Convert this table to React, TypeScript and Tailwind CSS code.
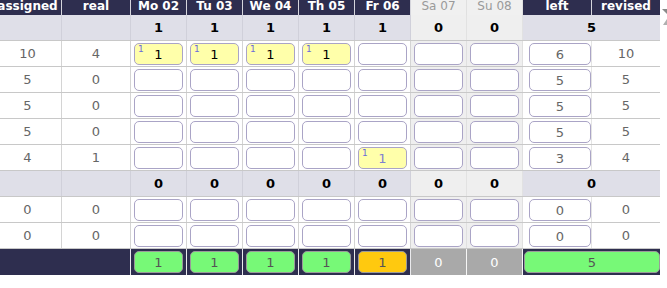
import React from "react";

type Cell = null | { v: number; note?: number; soft?: boolean };

type Row = { assigned: number; real: number; days: Cell[]; left: number; revised: number };

const days = ["Mo 02", "Tu 03", "We 04", "Th 05", "Fr 06", "Sa 07", "Su 08"];

const e: Cell = null;
const one: Cell = { v: 1, note: 1 };

const groupA: Row[] = [
  { assigned: 10, real: 4, days: [one, one, one, one, e, e, e], left: 6, revised: 10 },
  { assigned: 5, real: 0, days: [e, e, e, e, e, e, e], left: 5, revised: 5 },
  { assigned: 5, real: 0, days: [e, e, e, e, e, e, e], left: 5, revised: 5 },
  { assigned: 5, real: 0, days: [e, e, e, e, e, e, e], left: 5, revised: 5 },
  { assigned: 4, real: 1, days: [e, e, e, e, { v: 1, note: 1, soft: true }, e, e], left: 3, revised: 4 },
];

const groupB: Row[] = [
  { assigned: 0, real: 0, days: [e, e, e, e, e, e, e], left: 0, revised: 0 },
  { assigned: 0, real: 0, days: [e, e, e, e, e, e, e], left: 0, revised: 0 },
];

const totals = [1, 1, 1, 1, 1, 0, 0];

const cols = "grid grid-cols-[68px_69px_56px_56px_56px_56px_56px_56px_56px_69px_68px]";

function SummaryRow({ values, total }: { values: number[]; total: number }) {
  return (
    <div className={`${cols} h-[26px] border-b border-[#c8c8c8] bg-[#dfdfe8] text-[13px] font-bold text-black`}>
      <div className="border-r border-[#d0d0da]" />
      <div className="border-r border-[#d0d0da]" />
      {values.map((n, i) => (
        <div
          key={i}
          className={`flex items-center justify-center border-r ${
            i >= 5 ? "bg-[#efefef] border-[#e2e2e2]" : "border-[#d0d0da]"
          }`}
        >
          {n}
        </div>
      ))}
      <div className="col-span-2 flex items-center justify-center">{total}</div>
    </div>
  );
}

function DayInput({ cell }: { cell: Cell }) {
  const filled = cell !== null;
  return (
    <div
      className={`relative ml-[3px] mt-[2px] h-[22px] w-[49px] rounded-[5px] border border-[#aaa4c6] ${
        filled ? "bg-[#ffffaa]" : "bg-white"
      }`}
    >
      {cell && (
        <>
          <span className="absolute left-[3px] top-[-1px] text-[9px] leading-[12px] text-[#6b6bd9]">
            {cell.note}
          </span>
          <span
            className={`absolute inset-0 flex items-center justify-center pt-[2px] text-[13px] ${
              cell.soft ? "text-[#7f7fd0]" : "text-black"
            }`}
          >
            {cell.v}
          </span>
        </>
      )}
    </div>
  );
}

function DataRow({ row }: { row: Row }) {
  return (
    <div className={`${cols} h-[26px] border-b border-[#c8c8c8] bg-white text-[13px] text-[#666]`}>
      <div className="flex items-center justify-center border-r border-[#d4d4d4]">{row.assigned}</div>
      <div className="flex items-center justify-center border-r border-[#d4d4d4]">{row.real}</div>
      {row.days.map((c, i) => (
        <div
          key={i}
          className={`border-r ${i >= 5 ? "bg-[#efefef] border-[#e0e0e0]" : "border-[#d4d4d4]"}`}
        >
          <DayInput cell={c} />
        </div>
      ))}
      <div className="border-r border-[#e4e4e4]">
        <div className="ml-[6px] mt-[2px] flex h-[22px] w-[62px] items-center justify-center rounded-[5px] border border-[#aaa4c6] bg-white pt-[1px]">
          {row.left}
        </div>
      </div>
      <div className="flex items-center justify-center">{row.revised}</div>
    </div>
  );
}

export default function App() {
  return (
    <div className="relative h-[288px] w-[667px] overflow-hidden bg-white font-['DejaVu_Sans',Verdana,sans-serif] text-[12px]">
      <div className="ml-[-6px] w-[666px]">
        {/* column headings */}
        <div className={`${cols} h-[15px] bg-[#2e2e4f] font-bold leading-[13px] text-white`}>
          <div className="flex justify-center border-r border-white/80 whitespace-nowrap">assigned</div>
          <div className="flex justify-center border-r border-white/80">real</div>
          {days.map((d, i) => (
            <div
              key={d}
              className={`flex justify-center whitespace-nowrap ${
                i >= 5
                  ? "bg-[#f0f0f0] font-normal text-[#9a9a9a] border-r border-[#e0e0e0]"
                  : "border-r border-white/80"
              }`}
            >
              {d}
            </div>
          ))}
          <div className="flex justify-center border-r border-white/80">left</div>
          <div className="flex justify-center">revised</div>
        </div>

        <SummaryRow values={totals} total={5} />
        {groupA.map((r, i) => (
          <DataRow key={`a${i}`} row={r} />
        ))}
        <SummaryRow values={[0, 0, 0, 0, 0, 0, 0]} total={0} />
        {groupB.map((r, i) => (
          <DataRow key={`b${i}`} row={r} />
        ))}

        {/* totals bar */}
        <div className={`${cols} h-[26px] bg-[#2e2e4f] text-[13px] text-[#555]`}>
          <div />
          <div className="border-r border-white/90" />
          {totals.map((n, i) =>
            i >= 5 ? (
              <div
                key={i}
                className="flex items-center justify-center border-r border-white/90 bg-[#a9a9a9] pt-[1px] text-white"
              >
                {n}
              </div>
            ) : (
              <div key={i} className="border-r border-white/90">
                <div
                  className={`ml-[3px] mt-[2px] flex h-[22px] w-[49px] items-center justify-center rounded-[5px] border border-[#9a9a9a] pt-[1px] ${
                    i === 4 ? "bg-[#ffc90f]" : "bg-[#77f977]"
                  }`}
                >
                  {n}
                </div>
              </div>
            )
          )}
          <div className="col-span-2">
            <div className="ml-[1px] mt-[2px] flex h-[22px] w-[136px] items-center justify-center rounded-[5px] border border-[#9a9a9a] bg-[#77f977] pt-[1px]">
              5
            </div>
          </div>
        </div>
      </div>

      {/* scroll handle marks at the right edge */}
      <svg className="absolute right-0 top-[6px]" width="6" height="20" viewBox="0 0 6 20">
        <path d="M1 3 L6 3 L6 8 Z" fill="#8a8a8a" />
        <path d="M6 13 L6 19 L2 19 Z" fill="#b0b0b0" />
      </svg>
    </div>
  );
}
